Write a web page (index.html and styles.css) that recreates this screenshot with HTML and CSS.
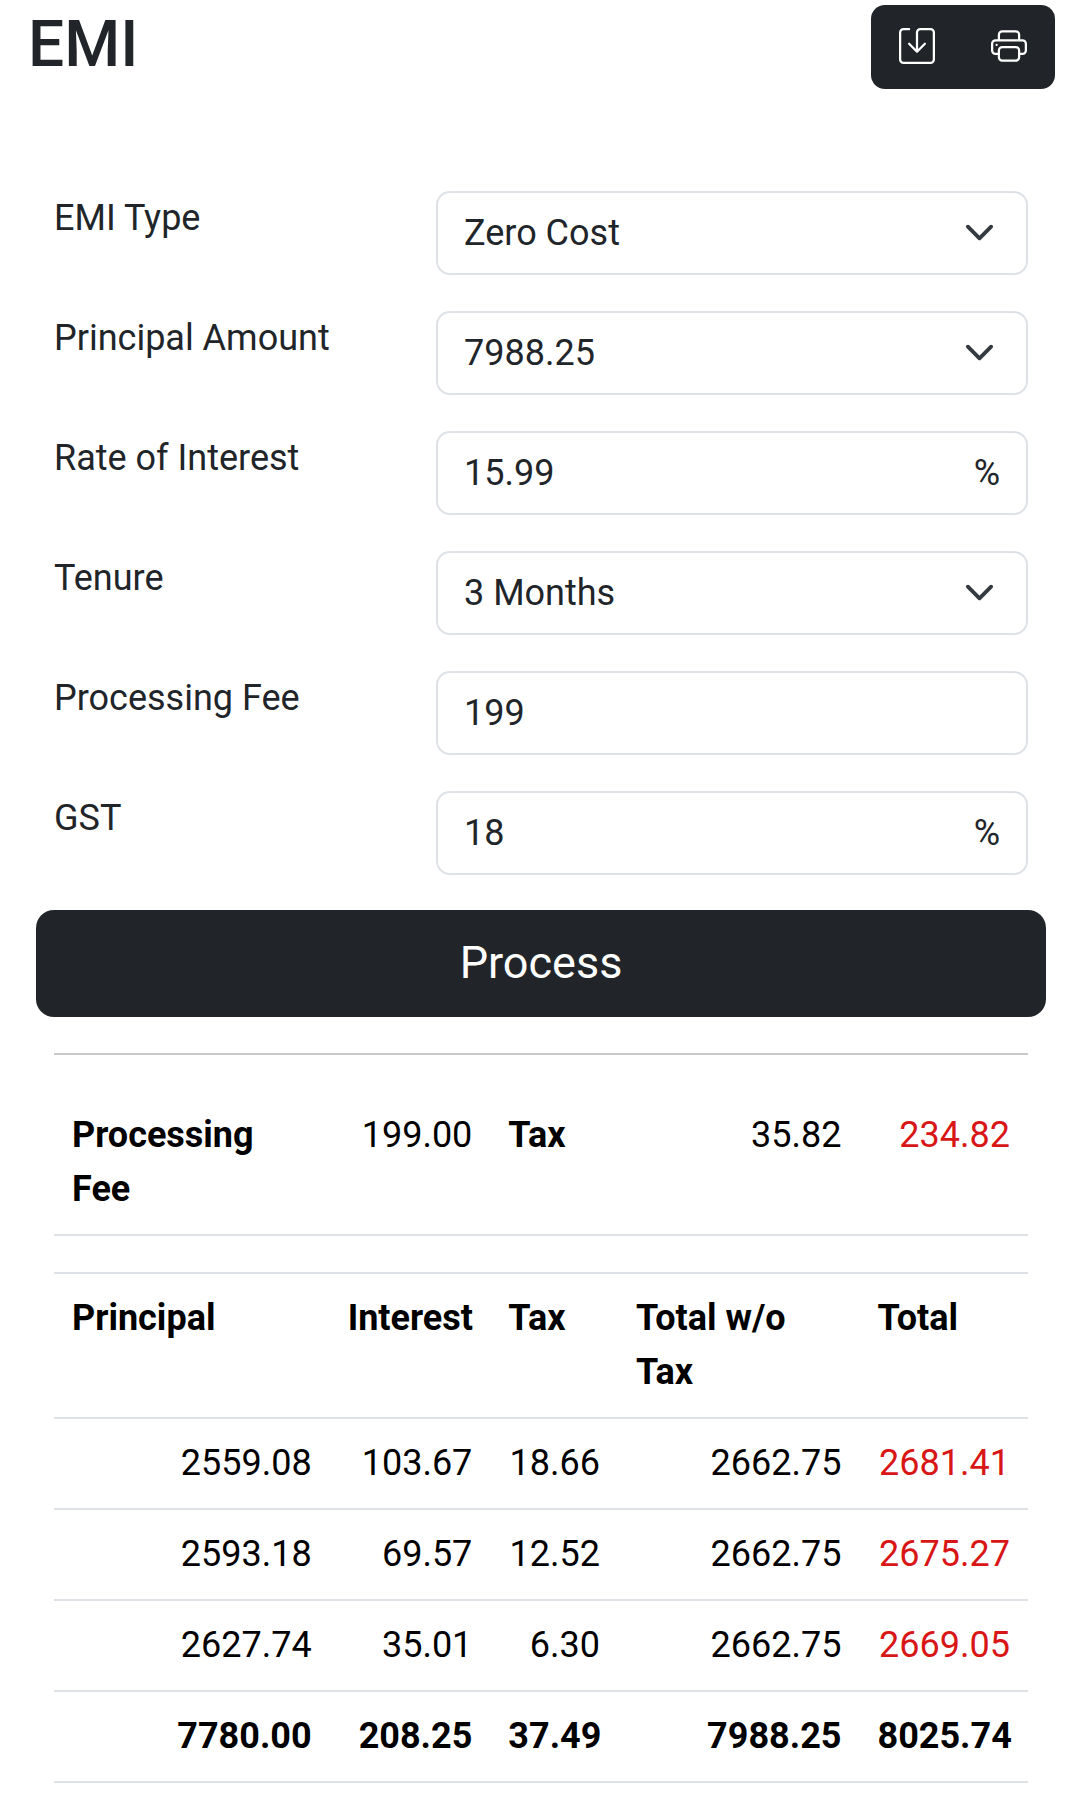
FILE: index.html
```html
<!DOCTYPE html>
<html lang="en">
<head>
  <meta charset="utf-8">
  <meta name="viewport" content="width=device-width, initial-scale=1">
  <title>EMI</title>
  <link rel="stylesheet" href="styles.css">
</head>
<body>
  <header class="page-header">
    <h1 class="page-title">EMI</h1>
    <div class="toolbar" role="group" aria-label="Actions">
      <button type="button" class="toolbar-button" aria-label="Save">
        <svg class="icon" viewBox="0 0 16 16" aria-hidden="true"><path d="M2 1a1 1 0 0 0-1 1v12a1 1 0 0 0 1 1h12a1 1 0 0 0 1-1V2a1 1 0 0 0-1-1H9.5a1 1 0 0 0-1 1v7.293l2.646-2.647a.5.5 0 0 1 .708.708l-3.5 3.5a.5.5 0 0 1-.708 0l-3.5-3.5a.5.5 0 1 1 .708-.708L7.5 9.293V2a2 2 0 0 1 2-2H14a2 2 0 0 1 2 2v12a2 2 0 0 1-2 2H2a2 2 0 0 1-2-2V2a2 2 0 0 1 2-2h2.5a.5.5 0 0 1 0 1z"/></svg>
      </button>
      <button type="button" class="toolbar-button" aria-label="Print">
        <svg class="icon" viewBox="0 0 16 16" aria-hidden="true"><path d="M2.5 8a.5.5 0 1 0 0-1 .5.5 0 0 0 0 1"/><path d="M5 1a2 2 0 0 0-2 2v2H2a2 2 0 0 0-2 2v3a2 2 0 0 0 2 2h1v1a2 2 0 0 0 2 2h6a2 2 0 0 0 2-2v-1h1a2 2 0 0 0 2-2V7a2 2 0 0 0-2-2h-1V3a2 2 0 0 0-2-2zM4 3a1 1 0 0 1 1-1h6a1 1 0 0 1 1 1v2H4zm1 5a2 2 0 0 0-2 2v1H2a1 1 0 0 1-1-1V7a1 1 0 0 1 1-1h12a1 1 0 0 1 1 1v3a1 1 0 0 1-1 1h-1v-1a2 2 0 0 0-2-2zm7 2v3a1 1 0 0 1-1 1H5a1 1 0 0 1-1-1v-3a1 1 0 0 1 1-1h6a1 1 0 0 1 1 1"/></svg>
      </button>
    </div>
  </header>

  <main class="content">
    <form class="emi-form">
      <div class="field">
        <label for="emi-type">EMI Type</label>
        <select id="emi-type" class="control select"><option>Zero Cost</option></select>
      </div>
      <div class="field">
        <label for="principal">Principal Amount</label>
        <select id="principal" class="control select"><option>7988.25</option></select>
      </div>
      <div class="field">
        <label for="rate">Rate of Interest</label>
        <div class="control input-group">
          <input id="rate" class="input" type="text" inputmode="decimal" value="15.99">
          <span>%</span>
        </div>
      </div>
      <div class="field">
        <label for="tenure">Tenure</label>
        <select id="tenure" class="control select"><option>3 Months</option></select>
      </div>
      <div class="field">
        <label for="fee">Processing Fee</label>
        <input id="fee" class="control" type="text" inputmode="decimal" value="199">
      </div>
      <div class="field">
        <label for="gst">GST</label>
        <div class="control input-group">
          <input id="gst" class="input" type="text" inputmode="decimal" value="18">
          <span>%</span>
        </div>
      </div>
      <button type="button" class="process-button">Process</button>
    </form>

    <hr class="divider">

    <table class="table fee-table">
      <colgroup><col class="col-principal"><col class="col-interest"><col class="col-tax"><col class="col-net"><col class="col-total"></colgroup>
      <tbody>
        <tr>
          <th scope="row">Processing Fee</th>
          <td>199.00</td>
          <th scope="row">Tax</th>
          <td>35.82</td>
          <td class="due">234.82</td>
        </tr>
      </tbody>
    </table>

    <table class="table schedule-table">
      <colgroup><col class="col-principal"><col class="col-interest"><col class="col-tax"><col class="col-net"><col class="col-total"></colgroup>
      <thead>
        <tr>
          <th scope="col">Principal</th>
          <th scope="col">Interest</th>
          <th scope="col">Tax</th>
          <th scope="col">Total w/o Tax</th>
          <th scope="col">Total</th>
        </tr>
      </thead>
      <tbody>
        <tr><td>2559.08</td><td>103.67</td><td>18.66</td><td>2662.75</td><td class="due">2681.41</td></tr>
        <tr><td>2593.18</td><td>69.57</td><td>12.52</td><td>2662.75</td><td class="due">2675.27</td></tr>
        <tr><td>2627.74</td><td>35.01</td><td>6.30</td><td>2662.75</td><td class="due">2669.05</td></tr>
      </tbody>
      <tfoot>
        <tr><td>7780.00</td><td>208.25</td><td>37.49</td><td>7988.25</td><td>8025.74</td></tr>
      </tfoot>
    </table>
  </main>
</body>
</html>
```
FILE: styles.css
```css
*,
*::before,
*::after {
  box-sizing: border-box;
}

body {
  margin: 0;
  background: #fff;
  color: #212529;
  font-family: Roboto, "Liberation Sans", sans-serif;
  font-size: 36px;
  line-height: 54px;
}

button,
input,
select {
  font: inherit;
  color: inherit;
}

.page-header {
  display: flex;
  justify-content: space-between;
  align-items: flex-start;
  padding: 5px 25px 0 28px;
}

.page-title {
  margin: 0;
  font-size: 64px;
  font-weight: 500;
  line-height: 80px;
}

.toolbar {
  display: flex;
  overflow: hidden;
  border-radius: 14px;
  background: #212529;
}

.toolbar-button {
  display: flex;
  align-items: center;
  justify-content: center;
  width: 92px;
  height: 84px;
  padding: 0 0 3px;
  border: 0;
  background: none;
  color: #fff;
}

.icon {
  width: 36px;
  height: 36px;
  fill: currentColor;
}

.content {
  padding: 102px 52px 26px 54px;
}

.emi-form {
  display: flex;
  flex-direction: column;
  gap: 36px;
}

.field {
  display: grid;
  grid-template-columns: 382fr 592fr;
  align-items: start;
}

.control {
  width: 100%;
  height: 84px;
  margin: 0;
  padding: 13px 26px;
  border: 2px solid #dee2e6;
  border-radius: 14px;
  background: #fff;
  line-height: 54px;
}

.select {
  appearance: none;
  background: #fff url("data:image/svg+xml,%3Csvg xmlns='http://www.w3.org/2000/svg' viewBox='0 0 16 16'%3E%3Cpath fill='none' stroke='%23343a40' stroke-linecap='round' stroke-linejoin='round' stroke-width='2' d='m2 5 6 6 6-6'/%3E%3C/svg%3E") no-repeat right 31px top 24px / 31px 31px;
}

.input-group {
  display: flex;
}

.input {
  flex: 1;
  min-width: 0;
  padding: 0;
  border: 0;
  background: none;
}

.process-button {
  height: 107px;
  margin: -1px -18px 0;
  padding: 0 0 2px;
  border: 0;
  border-radius: 18px;
  background: #212529;
  color: #fff;
  font-size: 45px;
}

.divider {
  height: 2px;
  margin: 36px 0;
  border: 0;
  background: #c8c9ca;
}

.table {
  width: 100%;
  border-collapse: separate;
  border-spacing: 0;
  table-layout: fixed;
  color: #000;
}

.col-principal { width: 28.3%; }
.col-interest { width: 16.5%; }
.col-tax { width: 13.1%; }
.col-net { width: 24.8%; }
.col-total { width: 17.3%; }

.table th,
.table td {
  padding: 17px 18px 18px;
  border-bottom: 2px solid #dee2e6;
  vertical-align: top;
}

.table th {
  font-weight: 700;
  text-align: left;
}

.table td {
  text-align: right;
  white-space: nowrap;
}

.schedule-table {
  margin-top: 36px;
  border-top: 2px solid #dee2e6;
}

.table tfoot td {
  font-weight: 700;
}

.table .due {
  color: #d91616;
}
```
